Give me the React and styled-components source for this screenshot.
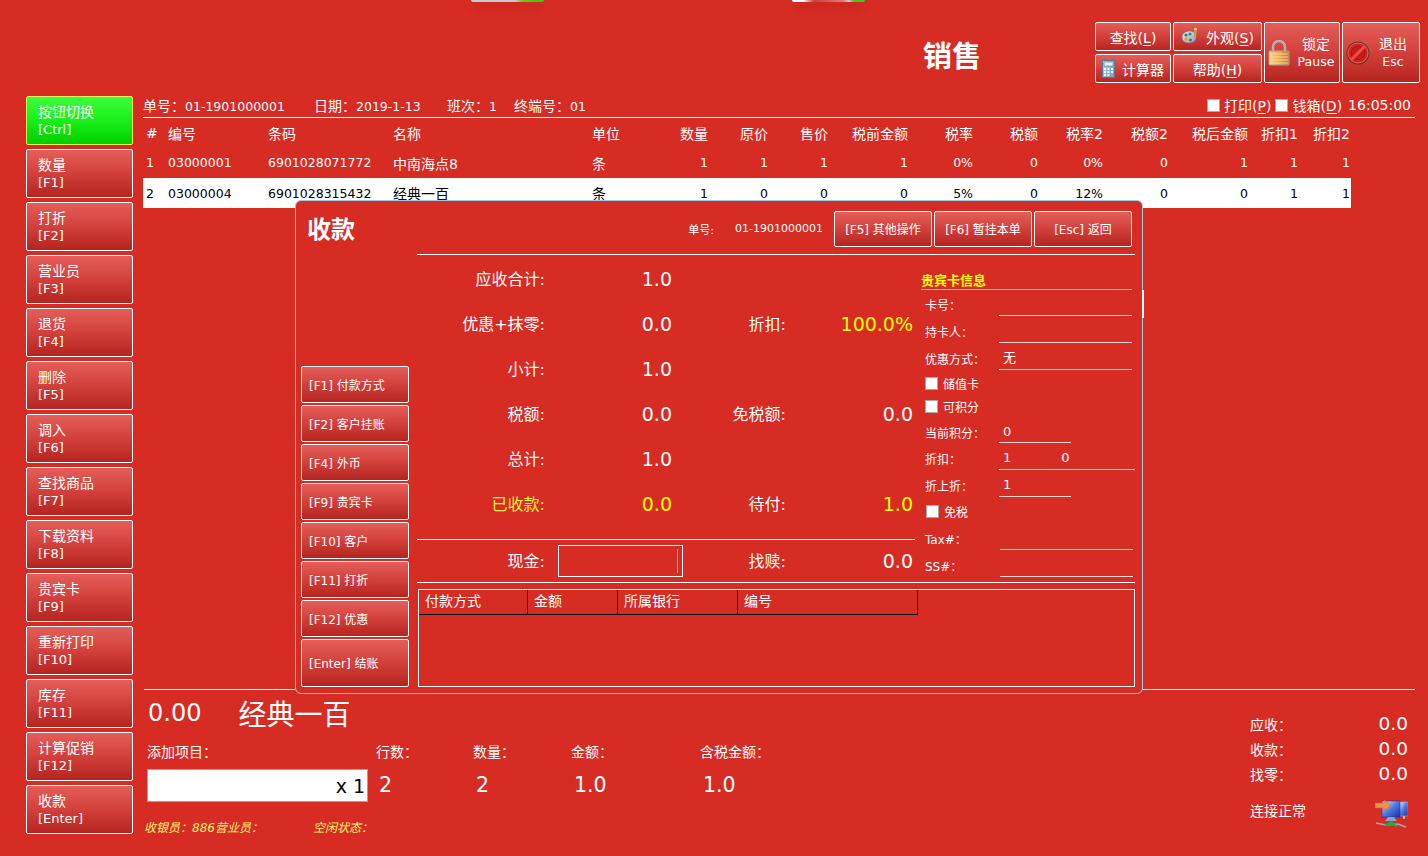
import React from "react";
import styled, { createGlobalStyle, css } from "styled-components";

const BG = "#d62c24";
const FONT = `"DejaVu Sans", "Noto Sans CJK SC", sans-serif`;

const Global = createGlobalStyle`
  html, body { margin: 0; padding: 0; background: ${BG}; }
  * { box-sizing: border-box; }
`;

const Page = styled.div`
  position: relative;
  width: 1428px;
  height: 856px;
  overflow: hidden;
  background: ${BG};
  color: #fff;
  font-family: ${FONT};
  font-size: 14px;
`;

const TopStrip = styled.div`
  height: 2px;
  padding-left: 471px;
  display: flex;
  gap: 248px;
`;
const Stub = styled.div`
  width: 73px;
  height: 2px;
  border-radius: 0 0 3px 3px;
  box-shadow: 0 5px 10px rgba(120, 10, 10, 0.45);
  background: ${(p) =>
    p.$red
      ? "linear-gradient(90deg,#fff 0,#fff 15%,#c8403c 30%,#e27a76 70%,#c9c9d4 78%,#44c41c 85%,#44c41c 100%)"
      : "linear-gradient(90deg,#c8c8c8 0,#c8c8c8 60%,#8ab82a 70%,#44c41c 85%,#44c41c 100%)"};
`;

const Header = styled.header`
  height: 94px;
  display: flex;
  justify-content: flex-end;
  padding: 20px 8px 0 0;
`;
const Title = styled.h1`
  margin: 18px 114px 0 0;
  font-size: 29px;
  line-height: 34px;
  font-weight: 700;
`;
const Tools = styled.div`
  display: grid;
  grid-template-columns: 76px 89px 76px 78px;
  grid-template-rows: 29px 29px;
  gap: 3px 2px;
  height: 61px;
`;
const gloss = css`
  border: 1px solid #fff;
  border-radius: 2px;
  background: linear-gradient(180deg, #e45e59 0%, #d3403b 50%, #b5241f 100%);
  color: #fff;
  font-family: ${FONT};
  padding: 0;
`;
const ToolBtn = styled.button`
  ${gloss}
  font-size: 14px;
  display: flex;
  align-items: center;
  justify-content: center;
  gap: 7px;
  u { text-underline-offset: 2px; }
`;
const TallBtn = styled.button`
  ${gloss}
  grid-row: span 2;
  display: flex;
  align-items: center;
  gap: ${(p) => p.$gap}px;
  padding: 0 ${(p) => p.$pr}px 0 3px;
`;
const TallText = styled.span`
  flex: 1;
  display: flex;
  flex-direction: column;
  align-items: center;
  line-height: 17px;
  font-size: 12.5px;
`;
const TallZh = styled.span`
  font-size: 14px;
`;

const Body = styled.div`
  display: flex;
  height: 760px;
`;
const Side = styled.nav`
  width: 107px;
  margin-left: 26px;
  display: flex;
  flex-direction: column;
  gap: 4px;
`;
const SideBtn = styled.button`
  ${gloss}
  height: 49px;
  text-align: left;
  padding: 0 0 0 11px;
  font-size: 14px;
  line-height: 17px;
  ${(p) =>
    p.$on &&
    css`
      border-color: #e6f060;
      background: linear-gradient(180deg, #3cff3c 0%, #16ec16 55%, #00cf00 100%);
    `}
`;
const KeyLine = styled.span`
  display: block;
  font-size: 13px;
`;

const Main = styled.main`
  width: 1272px;
  margin-left: 10px;
  display: flex;
  flex-direction: column;
`;
const InfoBar = styled.div`
  height: 22px;
  padding-bottom: 3px;
  border-bottom: 1px solid #fff;
  display: flex;
  align-items: center;
  font-size: 14px;
  white-space: nowrap;
`;
const InfoItem = styled.span`
  width: ${(p) => p.$w}px;
`;
const InfoNum = styled.span`
  font-size: 12.5px;
`;
const InfoRight = styled.div`
  margin-left: auto;
  margin-right: 4px;
  display: flex;
  align-items: center;
  gap: 4px;
  u { text-underline-offset: 2px; }
`;
const Box = styled.span`
  display: inline-block;
  flex: none;
  width: 13px;
  height: 13px;
  background: #fff;
  border: 1px solid #a8a8a8;
`;
const Clock = styled.span`
  margin-left: 2px;
  font-size: 14px;
`;

const Table = styled.div`
  flex: 1;
`;
const cols = "25px 100px 125px 199px 68px 49px 60px 60px 80px 65px 65px 65px 65px 80px 50px 52px";
const Row = styled.div`
  display: grid;
  grid-template-columns: ${cols};
  width: 1208px;
  height: ${(p) => p.$h}px;
  padding-bottom: ${(p) => (p.$sel ? 0 : 2)}px;
  align-items: center;
  font-size: ${(p) => (p.$head ? 14 : 12.5)}px;
  ${(p) => p.$sel && "background:#fff;color:#000;"}
`;
const Cell = styled.span`
  white-space: nowrap;
  text-align: ${(p) => (p.$r ? "right" : "left")};
  padding: ${(p) => (p.$r ? "0 1px 0 0" : "0")};
  ${(p) => p.$first && "padding-left:3px;"}
  ${(p) => p.$zh && "font-size:14px;"}
`;

const Footer = styled.footer`
  height: 167px;
  margin-left: 1px;
  border-top: 1px solid #fff;
  display: flex;
  justify-content: space-between;
  padding-right: 7px;
`;
const FootLeft = styled.div`
  display: flex;
  flex-direction: column;
  padding-left: 3px;
`;
const BigRow = styled.div`
  display: flex;
  align-items: center;
  gap: 37px;
  height: 38px;
  margin-top: 4px;
  padding-left: 1px;
`;
const BigPrice = styled.span`
  font-size: 24px;
`;
const BigName = styled.span`
  font-size: 28px;
`;
const Stats = styled.div`
  display: grid;
  grid-template-columns: 229px 97px 98px 129px 90px;
  grid-template-rows: 22px 33px;
  row-gap: 7px;
  margin-top: 8px;
  align-items: center;
`;
const StatLabel = styled.span`
  font-size: 14px;
  white-space: nowrap;
`;
const StatValue = styled.span`
  font-size: 20.5px;
  padding: 0 0 1px 3px;
`;
const ItemInput = styled.div`
  width: 221px;
  height: 33px;
  background: #fff;
  border: 1px solid #a5a5a5;
  color: #000;
  font-size: 19px;
  display: flex;
  align-items: center;
  justify-content: flex-end;
  padding-right: 2px;
`;
const Status = styled.div`
  display: flex;
  margin: 15px 0 0 -3px;
  height: 18px;
  align-items: center;
  color: #f6f46e;
  font-size: 12px;
  font-style: italic;
  white-space: nowrap;
`;
const StatusItem = styled.span`
  width: ${(p) => p.$w}px;
`;
const FootRight = styled.div`
  width: 158px;
  padding-top: 21px;
`;
const Tot = styled.div`
  height: 25px;
  display: flex;
  align-items: center;
  justify-content: space-between;
  font-size: 14px;
`;
const TotVal = styled.span`
  font-size: 18.5px;
`;
const Conn = styled.div`
  margin-top: 12px;
  height: 32px;
  display: flex;
  align-items: center;
  justify-content: space-between;
  font-size: 14px;
`;
const ConnText = styled.span`
  padding-bottom: 8px;
`;

const Modal = styled.section`
  position: absolute;
  left: 295px;
  top: 200px;
  width: 848px;
  height: 494px;
  background: ${BG};
  border: 1px solid #9cc8e4;
  border-radius: 6px;
  padding: 10px 7px 6px 5px;
  display: flex;
  gap: 8px;
  z-index: 2;
`;
const EdgeTick = styled.span`
  position: absolute;
  left: 846px;
  top: 89px;
  width: 2px;
  height: 28px;
  background: #fff;
`;
const ModalLeft = styled.div`
  width: 108px;
  flex: none;
  display: flex;
  flex-direction: column;
  gap: 2px;
`;
const ModalTitle = styled.h2`
  margin: 4px auto auto 6px;
  font-size: 24px;
  line-height: 30px;
  font-weight: 700;
`;
const PayBtn = styled.button`
  ${gloss}
  flex: none;
  height: ${(p) => (p.$big ? 48 : 37)}px;
  text-align: left;
  padding: 0 0 1px 7px;
  font-size: 12px;
`;
const ModalRight = styled.div`
  flex: 1;
  min-width: 0;
  display: flex;
  flex-direction: column;
`;
const ModalTop = styled.div`
  height: 44px;
  padding: 0 3px 8px 0;
  border-bottom: 1px solid #fff;
  display: flex;
  align-items: center;
  justify-content: flex-end;
  font-size: 11px;
`;
const TopNo = styled.span`
  margin-right: 21px;
`;
const TopNum = styled.span`
  margin-right: 11px;
`;
const TopBtns = styled.div`
  display: flex;
  gap: 2px;
`;
const TopBtn = styled.button`
  ${gloss}
  width: 98px;
  height: 36px;
  font-size: 12px;
`;
const Split = styled.div`
  height: 328px;
  border-bottom: 1px solid #fff;
  display: flex;
  gap: 6px;
`;
const Calc = styled.div`
  width: 498px;
  flex: none;
  display: flex;
  flex-direction: column;
`;
const CalcGrid = styled.div`
  height: 284px;
  padding: 2px 2px 0 0;
  display: grid;
  grid-template-columns: 128px 127px 114px 127px;
  grid-auto-rows: 45px;
  align-items: center;
`;
const CLabel = styled.span`
  text-align: right;
  font-size: 16px;
  padding-bottom: 3px;
  ${(p) => p.$y && "color:#f4f23c;"}
`;
const CValue = styled.span`
  text-align: right;
  font-size: 19px;
  padding-bottom: 1px;
  ${(p) => p.$y && "color:#ffff00;"}
`;
const CashRow = styled.div`
  flex: 1;
  border-top: 1px solid #fff;
  padding-right: 2px;
  display: grid;
  grid-template-columns: 128px 127px 114px 127px;
  align-items: center;
`;
const CashInput = styled.div`
  justify-self: end;
  width: 125px;
  height: 32px;
  margin-right: -11px;
  border: 1px solid #fff;
  display: flex;
  align-items: center;
  justify-content: flex-end;
  padding-right: 4px;
`;
const Caret = styled.span`
  width: 1px;
  height: 24px;
  background: #8cc4c0;
`;
const Card = styled.aside`
  width: 214px;
  padding-top: 17px;
  font-size: 12px;
`;
const CardTitle = styled.div`
  width: 211px;
  height: 18px;
  border-bottom: 1px solid #f0b0ac;
  color: #ffff00;
  font-size: 13px;
  font-weight: 700;
  line-height: 17px;
`;
const CardRow = styled.div`
  display: flex;
  align-items: flex-end;
  height: ${(p) => p.$h ?? 27}px;
  padding-left: 4px;
`;
const CardLabel = styled.span`
  width: 74px;
  flex: none;
  align-self: center;
  padding-top: 3px;
  white-space: nowrap;
`;
const Field = styled.span`
  width: ${(p) => p.$w}px;
  height: 100%;
  border-bottom: 1px solid #f0d8d6;
  padding: ${(p) => (p.$up ? 0 : 3)}px 0 0 4px;
  display: flex;
  align-items: center;
  font-size: 13px;
  ${(p) => p.$shift && "margin-left:1px;"}
`;
const FieldGap = styled.span`
  margin-left: 50px;
`;
const CheckRow = styled.label`
  display: flex;
  align-items: center;
  gap: 5px;
  height: ${(p) => p.$h}px;
  padding: ${(p) => p.$pt ?? 0}px 0 0 ${(p) => p.$pl ?? 4}px;
`;

const PayTable = styled.div`
  flex: 1;
  margin: 6px 0 0 1px;
  border: 1px solid #fff;
`;
const PayHead = styled.div`
  display: grid;
  grid-template-columns: 109px 90px 120px 180px;
  width: 499px;
  height: 25px;
  border-bottom: 1px solid #000;
`;
const PayCol = styled.span`
  padding-left: 6px;
  border-right: 1px solid #000;
  line-height: 22px;
  font-size: 14px;
`;

const Palette = () => (
  <svg width="18" height="17" viewBox="0 0 18 17">
    <defs>
      <linearGradient id="pal" x1="0" y1="0" x2="1" y2="1">
        <stop offset="0" stopColor="#dfe8ee" />
        <stop offset="1" stopColor="#8fa6b8" />
      </linearGradient>
    </defs>
    <path d="M1 9c0-4 4-6 8-6s6 3 6 6-2 6-7 6-7-3-7-6z" fill="url(#pal)" stroke="#5f7689" strokeWidth=".6" />
    <circle cx="5" cy="7" r="1.6" fill="#3b8a3b" />
    <circle cx="9" cy="6" r="1.6" fill="#2c7ad0" />
    <circle cx="5" cy="11" r="1.6" fill="#e0a020" />
    <circle cx="9.5" cy="12" r="1.6" fill="#d04040" />
    <path d="M13 1h3l-1 9h-2z" fill="#c89a50" />
    <path d="M13 0h3v2h-3z" fill="#e8c070" />
  </svg>
);
const Calculator = () => (
  <svg width="13" height="18" viewBox="0 0 13 18">
    <defs>
      <linearGradient id="calc" x1="0" y1="0" x2="1" y2="1">
        <stop offset="0" stopColor="#b8daf2" />
        <stop offset="1" stopColor="#5f98c8" />
      </linearGradient>
    </defs>
    <rect x=".5" y=".5" width="12" height="17" fill="url(#calc)" stroke="#55789a" />
    <rect x="2" y="2" width="9" height="4" fill="#e8eef0" stroke="#4a6a8a" strokeWidth=".5" />
    <g fill="#f4f6f8">
      <rect x="2" y="8" width="2" height="2" />
      <rect x="5.5" y="8" width="2" height="2" />
      <rect x="9" y="8" width="2" height="2" />
      <rect x="2" y="11" width="2" height="2" />
      <rect x="5.5" y="11" width="2" height="2" />
      <rect x="9" y="11" width="2" height="2" />
      <rect x="2" y="14" width="2" height="2" />
      <rect x="5.5" y="14" width="2" height="2" />
      <rect x="9" y="14" width="2" height="2" fill="#e89a50" />
    </g>
  </svg>
);
const Lock = () => (
  <svg width="22" height="26" viewBox="0 0 22 26">
    <defs>
      <linearGradient id="lk" x1="0" y1="0" x2="1" y2="0">
        <stop offset="0" stopColor="#f6d28a" />
        <stop offset=".5" stopColor="#eea84a" />
        <stop offset="1" stopColor="#c67a2c" />
      </linearGradient>
    </defs>
    <path d="M5 12V7a6 6 0 0 1 12 0v5" fill="none" stroke="#c4c8cc" strokeWidth="2.4" />
    <path d="M5 12V7a6 6 0 0 1 12 0v5" fill="none" stroke="#7e858c" strokeWidth=".6" />
    <rect x="1" y="11" width="20" height="14" rx="1" fill="url(#lk)" stroke="#a8a49a" />
    <path d="M2 14h18M2 17h18M2 20h18M2 23h18" stroke="#fbe4b0" strokeWidth=".8" />
  </svg>
);
const NoSign = () => (
  <svg width="24" height="24" viewBox="0 0 24 24">
    <circle cx="12" cy="12" r="11.5" fill="#4a3a38" opacity=".8" />
    <circle cx="12" cy="12" r="10" fill="#d8201c" stroke="#f05a54" strokeWidth="1" />
    <circle cx="12" cy="12" r="6.8" fill="#c41e1a" stroke="#8c1411" strokeWidth=".6" />
    <path d="M5.5 18.5L18.5 5.5" stroke="#f44a44" strokeWidth="3" />
  </svg>
);
const Network = () => (
  <svg width="33" height="29" viewBox="0 0 33 29">
    <defs>
      <linearGradient id="scr" x1="0" y1="0" x2="1" y2="1">
        <stop offset="0" stopColor="#e8f0ff" />
        <stop offset=".5" stopColor="#4f78e0" />
        <stop offset="1" stopColor="#1c2ea8" />
      </linearGradient>
    </defs>
    <rect x="24" y="2" width="9" height="14" fill="url(#scr)" stroke="#9ab0c8" strokeWidth=".6" />
    <path d="M28 16h2v3h-2z" fill="#a8b8c8" />
    <rect x="7" y="1" width="18" height="16" fill="url(#scr)" stroke="#1c2ea8" strokeWidth=".6" />
    <path d="M13 17h6l3 4H10z" fill="#8aa4c4" />
    <path d="M0 3h9V0l7 5.5L9 11V8H0z" fill="#f0904a" stroke="#c8642a" strokeWidth=".6" />
    <path d="M1 23l10 2 12-1 8 3" fill="none" stroke="#a8a8a8" strokeWidth="1.6" />
    <path d="M9 25l8-4 3 3-6 2.500z" fill="#18b040" />
    <path d="M16 24l6 2" stroke="#18b040" strokeWidth="2" />
  </svg>
);

const sideItems = [
  ["数量", "[F1]"], ["打折", "[F2]"], ["营业员", "[F3]"], ["退货", "[F4]"], ["删除", "[F5]"],
  ["调入", "[F6]"], ["查找商品", "[F7]"], ["下载资料", "[F8]"], ["贵宾卡", "[F9]"],
  ["重新打印", "[F10]"], ["库存", "[F11]"], ["计算促销", "[F12]"], ["收款", "[Enter]"],
];
const heads = ["#", "编号", "条码", "名称", "单位", "数量", "原价", "售价", "税前金额", "税率", "税额", "税率2", "税额2", "税后金额", "折扣1", "折扣2"];
const rows = [
  ["1", "03000001", "6901028071772", "中南海点8", "条", "1", "1", "1", "1", "0%", "0", "0%", "0", "1", "1", "1"],
  ["2", "03000004", "6901028315432", "经典一百", "条", "1", "0", "0", "0", "5%", "0", "12%", "0", "0", "1", "1"],
];
const payBtns = ["[F1] 付款方式", "[F2] 客户挂账", "[F4] 外币", "[F9] 贵宾卡", "[F10] 客户", "[F11] 打折", "[F12] 优惠"];

const GridRow = ({ cells, head, sel, h }) => (
  <Row $head={head} $sel={sel} $h={h}>
    {cells.map((c, i) => (
      <Cell key={i} $r={i >= 5} $first={i === 0} $zh={i === 3 || i === 4}>{c}</Cell>
    ))}
  </Row>
);

export default function App() {
  return (
    <Page>
      <Global />
      <TopStrip>
        <Stub />
        <Stub $red />
      </TopStrip>
      <Header>
        <Title>销售</Title>
        <Tools>
          <ToolBtn><span>查找(<u>L</u>)</span></ToolBtn>
          <ToolBtn><Palette /><span>外观(<u>S</u>)</span></ToolBtn>
          <TallBtn $gap={3} $pr={0}><Lock /><TallText><TallZh>锁定</TallZh><span>Pause</span></TallText></TallBtn>
          <TallBtn $gap={0} $pr={3}><NoSign /><TallText><TallZh>退出</TallZh><span>Esc</span></TallText></TallBtn>
          <ToolBtn><Calculator /><span>计算器</span></ToolBtn>
          <ToolBtn><span>帮助(<u>H</u>)</span></ToolBtn>
        </Tools>
      </Header>
      <Body>
        <Side>
          <SideBtn $on>按钮切换<KeyLine>[Ctrl]</KeyLine></SideBtn>
          {sideItems.map(([a, b]) => (
            <SideBtn key={b}>{a}<KeyLine>{b}</KeyLine></SideBtn>
          ))}
        </Side>
        <Main>
          <InfoBar>
            <InfoItem $w={171}>单号&#xFF1A;<InfoNum>01-1901000001</InfoNum></InfoItem>
            <InfoItem $w={133}>日期&#xFF1A;<InfoNum>2019-1-13</InfoNum></InfoItem>
            <InfoItem $w={67}>班次&#xFF1A;<InfoNum>1</InfoNum></InfoItem>
            <InfoItem $w={120}>终端号&#xFF1A;<InfoNum>01</InfoNum></InfoItem>
            <InfoRight>
              <Box />
              <span>打印(<u>P</u>)</span>
              <Box />
              <span>钱箱(<u>D</u>)</span>
              <Clock>16:05:00</Clock>
            </InfoRight>
          </InfoBar>
          <Table>
            <GridRow cells={heads} head h={31} />
            <GridRow cells={rows[0]} h={29} />
            <GridRow cells={rows[1]} sel h={30} />
          </Table>
          <Footer>
            <FootLeft>
              <BigRow>
                <BigPrice>0.00</BigPrice>
                <BigName>经典一百</BigName>
              </BigRow>
              <Stats>
                <StatLabel>添加项目&#xFF1A;</StatLabel>
                <StatLabel>行数&#xFF1A;</StatLabel>
                <StatLabel>数量&#xFF1A;</StatLabel>
                <StatLabel>金额&#xFF1A;</StatLabel>
                <StatLabel>含税金额&#xFF1A;</StatLabel>
                <ItemInput>x 1</ItemInput>
                <StatValue>2</StatValue>
                <StatValue>2</StatValue>
                <StatValue>1.0</StatValue>
                <StatValue>1.0</StatValue>
              </Stats>
              <Status>
                <StatusItem $w={169}>收银员&#xFF1A;886营业员&#xFF1A;</StatusItem>
                <StatusItem $w={100}>空闲状态&#xFF1A;</StatusItem>
              </Status>
            </FootLeft>
            <FootRight>
              <Tot><span>应收&#xFF1A;</span><TotVal>0.0</TotVal></Tot>
              <Tot><span>收款&#xFF1A;</span><TotVal>0.0</TotVal></Tot>
              <Tot><span>找零&#xFF1A;</span><TotVal>0.0</TotVal></Tot>
              <Conn><ConnText>连接正常</ConnText><Network /></Conn>
            </FootRight>
          </Footer>
        </Main>
      </Body>

      <Modal>
        <EdgeTick />
        <ModalLeft>
          <ModalTitle>收款</ModalTitle>
          {payBtns.map((t) => (
            <PayBtn key={t}>{t}</PayBtn>
          ))}
          <PayBtn $big>[Enter] 结账</PayBtn>
        </ModalLeft>
        <ModalRight>
          <ModalTop>
            <TopNo>单号:</TopNo>
            <TopNum>01-1901000001</TopNum>
            <TopBtns>
              <TopBtn>[F5] 其他操作</TopBtn>
              <TopBtn>[F6] 暂挂本单</TopBtn>
              <TopBtn>[Esc] 返回</TopBtn>
            </TopBtns>
          </ModalTop>
          <Split>
            <Calc>
              <CalcGrid>
                <CLabel>应收合计:</CLabel><CValue>1.0</CValue><span /><span />
                <CLabel>优惠+抹零:</CLabel><CValue>0.0</CValue><CLabel>折扣:</CLabel><CValue $y>100.0%</CValue>
                <CLabel>小计:</CLabel><CValue>1.0</CValue><span /><span />
                <CLabel>税额:</CLabel><CValue>0.0</CValue><CLabel>免税额:</CLabel><CValue>0.0</CValue>
                <CLabel>总计:</CLabel><CValue>1.0</CValue><span /><span />
                <CLabel $y>已收款:</CLabel><CValue $y>0.0</CValue><CLabel>待付:</CLabel><CValue $y>1.0</CValue>
              </CalcGrid>
              <CashRow>
                <CLabel>现金:</CLabel>
                <CashInput><Caret /></CashInput>
                <CLabel>找赎:</CLabel>
                <CValue>0.0</CValue>
              </CashRow>
            </Calc>
            <Card>
              <CardTitle>贵宾卡信息</CardTitle>
              <CardRow $h={26}><CardLabel>卡号&#xFF1A;</CardLabel><Field $w={133} /></CardRow>
              <CardRow><CardLabel>持卡人&#xFF1A;</CardLabel><Field $w={133} /></CardRow>
              <CardRow><CardLabel>优惠方式&#xFF1A;</CardLabel><Field $w={133} $up>无</Field></CardRow>
              <CheckRow $h={25} $pt={2}><Box />储值卡</CheckRow>
              <CheckRow $h={23}><Box />可积分</CheckRow>
              <CardRow $h={25}><CardLabel>当前积分&#xFF1A;</CardLabel><Field $w={72}>0</Field></CardRow>
              <CardRow><CardLabel>折扣&#xFF1A;</CardLabel><Field $w={136}>1<FieldGap>0</FieldGap></Field></CardRow>
              <CardRow><CardLabel>折上折&#xFF1A;</CardLabel><Field $w={72}>1</Field></CardRow>
              <CheckRow $h={26} $pl={5} $pt={3}><Box />免税</CheckRow>
              <CardRow><CardLabel>Tax#&#xFF1A;</CardLabel><Field $w={133} $shift /></CardRow>
              <CardRow><CardLabel>SS#&#xFF1A;</CardLabel><Field $w={133} $shift /></CardRow>
            </Card>
          </Split>
          <PayTable>
            <PayHead>
              <PayCol>付款方式</PayCol>
              <PayCol>金额</PayCol>
              <PayCol>所属银行</PayCol>
              <PayCol>编号</PayCol>
            </PayHead>
          </PayTable>
        </ModalRight>
      </Modal>
    </Page>
  );
}
